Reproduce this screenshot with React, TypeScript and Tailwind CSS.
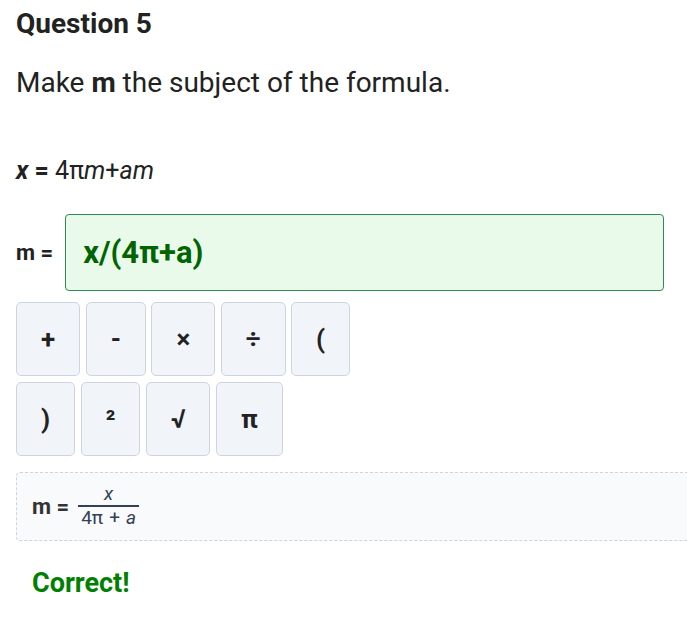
import { useState } from 'react';

const ROW_ONE = ['+', '-', '×', '÷', '('];
const ROW_TWO = [')', '²', '√', 'π'];

function KeyButton({ label, onPress }: { label: string; onPress: (s: string) => void }) {
  return (
    <button
      type="button"
      onClick={() => onPress(label)}
      className="px-[24px] py-[21px] text-[26px] leading-[normal] font-bold text-[#222] bg-[#f1f4f9] border border-[#cbd5e1] rounded-[5px]"
    >
      {label}
    </button>
  );
}

export default function App() {
  const [answer, setAnswer] = useState('x/(4π+a)');

  const handlePress = (s: string) => {
    setAnswer((prev) => prev + (s === '×' ? '*' : s === '÷' ? '/' : s));
  };

  return (
    <div className="min-h-screen overflow-x-hidden bg-white px-4 pt-[7px] text-[#222] font-['Roboto','Liberation_Sans',sans-serif]">
      <h2 className="text-[28px] leading-[normal] font-bold">Question 5</h2>

      <p className="mt-[26px] text-[28px] leading-[normal]">
        Make <b>m</b> the subject of the formula.
      </p>

      <p className="mt-[57px] text-[25px] leading-[normal]">
        <b>
          <i>x</i> =
        </b>{' '}
        4π<i>m</i>+<i>am</i>
      </p>

      <div className="mt-[29px] flex items-center gap-3">
        <span className="text-[22px] font-bold leading-[normal]">m =</span>
        <input
          value={answer}
          onChange={(e) => setAnswer(e.target.value)}
          className="w-[599px] h-[77px] px-[17px] text-[31px] font-bold text-[#006400] bg-[#eafaea] border border-[#2e8b57] rounded-[4px] outline-none"
        />
      </div>

      {/* keypad */}
      <div className="mt-[11px] flex flex-col gap-[6px]">
        <div className="flex gap-[5.5px]">
          {ROW_ONE.map((k) => (
            <KeyButton key={k} label={k} onPress={handlePress} />
          ))}
        </div>
        <div className="flex gap-[5.5px]">
          {ROW_TWO.map((k) => (
            <KeyButton key={k} label={k} onPress={handlePress} />
          ))}
        </div>
      </div>

      {/* rendered preview */}
      <div className="mt-4 w-[calc(100%+40px)] h-[69px] flex items-center px-[15px] bg-[#f8fafc] border border-dashed border-[#cbd5e1] rounded-[4px]">
        <span className="text-[22px] font-bold leading-[normal] text-[#333]">m =</span>
        <span className="ml-[9px] inline-flex flex-col items-center text-[19px] leading-[1.1] text-[#334155]">
          <span className="px-[3px] italic">x</span>
          <span className="px-[3px] pt-[1px] border-t-2 border-[#334155]">
            4π<span className="mx-[6px]">+</span>
            <i>a</i>
          </span>
        </span>
      </div>

      <p className="mt-[26px] pl-4 text-[27px] leading-[normal] font-bold text-[#008000]">Correct!</p>
    </div>
  );
}
